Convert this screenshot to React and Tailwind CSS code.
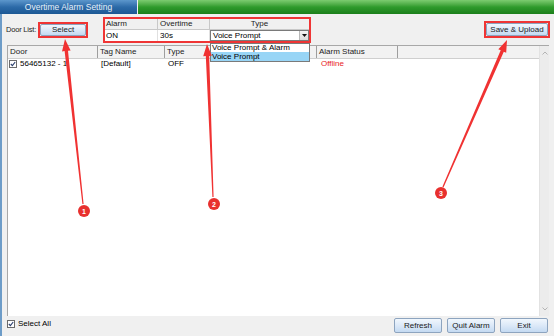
import React from "react";

const RED = "#ef3535";

// flat annotation arrow: thin tail, widening body, pointed head
const arrowPoints = (tx, ty, px, py) => {
  const dx = px - tx;
  const dy = py - ty;
  const len = Math.sqrt(dx * dx + dy * dy);
  const ux = dx / len;
  const uy = dy / len;
  const nx = -uy;
  const ny = ux;
  const head = 12;
  const bx = px - ux * head;
  const by = py - uy * head;
  const pts = [
    [tx + nx * 0.6, ty + ny * 0.6],
    [bx + nx * 1.7, by + ny * 1.7],
    [bx + nx * 4.3, by + ny * 4.3],
    [px, py],
    [bx - nx * 4.3, by - ny * 4.3],
    [bx - nx * 1.7, by - ny * 1.7],
    [tx - nx * 0.6, ty - ny * 0.6],
  ];
  return pts.map((p) => p[0].toFixed(1) + "," + p[1].toFixed(1)).join(" ");
};

const annotations = [
  { n: "1", tail: [83, 204], tip: [65, 39], cx: 84, cy: 211 },
  { n: "2", tail: [213, 197], tip: [207, 44], cx: 214, cy: 204 },
  { n: "3", tail: [443, 187], tip: [507, 40], cx: 441, cy: 193 },
];

const WinButton = ({ children, className = "" }) => (
  <div
    className={`flex items-center justify-center whitespace-nowrap border border-[#8da4bf] rounded-[2px] bg-gradient-to-b from-[#f1f7fd] via-[#dce9f8] to-[#c4daf2] text-[8px] text-[#1a1a1a] ${className}`}
  >
    {children}
  </div>
);

const CheckBox = () => (
  <div className="w-[8px] h-[8px] border border-[#6b6b6b] bg-white flex items-center justify-center">
    <svg width="6" height="6" viewBox="0 0 6 6">
      <polyline points="0.8,3 2.4,4.6 5.2,1" fill="none" stroke="#2b3f6e" strokeWidth="1.1" />
    </svg>
  </div>
);

const columns = [
  { title: "Door", w: "w-[90px]" },
  { title: "Tag Name", w: "w-[67px]" },
  { title: "Type", w: "w-[85px]" },
  { title: "", w: "w-[67px]" },
  { title: "Alarm Status", w: "w-[81px]" },
];

export default function App() {
  return (
    <div className="relative w-[554px] h-[336px] flex flex-col bg-[#f0f0f0] overflow-hidden font-['Liberation_Sans',Arial,sans-serif] text-[8px] leading-none text-black">
      {/* tab bar */}
      <div className="h-[14px] flex shrink-0">
        <div className="w-[137px] flex items-center justify-center text-[#e8f0f8] text-[8.5px] bg-gradient-to-b from-[#5c97cc] via-[#2c6aa8] to-[#1c5894]">
          Overtime Alarm Setting
        </div>
        <div className="flex-1 ml-[1px] bg-gradient-to-b from-[#7ccc70] via-[#2f9b2c] to-[#1b7f1b]" />
      </div>

      {/* body */}
      <div className="flex-1 flex flex-col border-l-2 border-[#6d9cc8]">
        {/* toolbar */}
        <div className="h-[31px] flex shrink-0 pl-[4px] pr-[4px]">
          <div className="w-[32px] mt-[12px] whitespace-nowrap text-[7.5px] tracking-[-0.2px] text-[#222]">Door List:</div>
          <div className="mt-[8px] w-[50px] h-[16px] border-2" style={{ borderColor: RED }}>
            <WinButton className="w-full h-full">Select</WinButton>
          </div>

          <div className="relative ml-[15px] mt-[3px] w-[208px] h-[26px] border-2" style={{ borderColor: RED }}>
            <div className="flex h-[11px] bg-[#f0f0f0] border-b border-[#c8c8c8] text-[#222]">
              <div className="w-[53px] pl-[1px] flex items-center border-r border-[#c8c8c8]">Alarm</div>
              <div className="w-[52px] pl-[2px] flex items-center border-r border-[#c8c8c8]">Overtime</div>
              <div className="flex-1 flex items-center justify-center">Type</div>
            </div>
            <div className="flex h-[11px] bg-white">
              <div className="w-[53px] pl-[1px] flex items-center border-r border-[#e0e0e0]">ON</div>
              <div className="w-[52px] pl-[2px] flex items-center border-r border-[#e0e0e0]">30s</div>
              <div className="flex-1 flex border border-[#7a7a7a]">
                <div className="flex-1 pl-[2px] flex items-center">Voice Prompt</div>
                <div className="w-[9px] flex items-center justify-center bg-gradient-to-b from-[#f4f4f4] to-[#dcdcdc] border-l border-[#b8b8b8]">
                  <svg width="5" height="3" viewBox="0 0 5 3">
                    <polygon points="0,0 5,0 2.5,3" fill="#111" />
                  </svg>
                </div>
              </div>
            </div>
            {/* open dropdown list */}
            <div className="absolute left-[105px] top-[24px] w-[100px] h-[19px] bg-white border border-[#7a7a7a] z-10 overflow-hidden">
              <div className="h-[8px] pl-[1px] flex items-center whitespace-nowrap">Voice Prompt &amp; Alarm</div>
              <div className="h-[9px] pl-[1px] flex items-center bg-[#98d5f6]">Voice Prompt</div>
            </div>
          </div>

          <div className="ml-auto mt-[7px] w-[66px] h-[17px] border-2" style={{ borderColor: RED }}>
            <WinButton className="w-full h-full">Save &amp; Upload</WinButton>
          </div>
        </div>

        {/* door table */}
        <div className="ml-[5px] w-[542px] h-[271px] flex border-t border-l border-[#a8a8a8] shrink-0">
          <div className="flex-1 flex flex-col bg-white">
            <div className="h-[13px] flex bg-[#f2f2f2] border-b border-[#cfcfcf] text-[#222]">
              {columns.map((c, i) => (
                <div key={i} className={`${c.w} pl-[2px] flex items-center border-r border-[#9e9e9e]`}>
                  {c.title}
                </div>
              ))}
              <div className="flex-1" />
            </div>
            <div className="h-[10px] flex items-center">
              <div className="w-[90px] pl-[1px] flex items-center gap-[3px]">
                <CheckBox />
                <span>56465132 - 1</span>
              </div>
              <div className="w-[67px] pl-[3px]">[Default]</div>
              <div className="w-[85px] pl-[3px]">OFF</div>
              <div className="w-[67px]" />
              <div className="w-[81px] pl-[4px] text-[#e8231c]">Offline</div>
            </div>
          </div>
          <div className="w-[10px] flex flex-col justify-between items-center py-[5px] bg-[#ececec] border-l border-[#e2e2e2]">
            <svg width="6" height="4" viewBox="0 0 6 4">
              <polyline points="0.5,3.5 3,1 5.5,3.5" fill="none" stroke="#b4b4b4" strokeWidth="1" />
            </svg>
            <svg width="6" height="4" viewBox="0 0 6 4">
              <polyline points="0.5,0.5 3,3 5.5,0.5" fill="none" stroke="#b4b4b4" strokeWidth="1" />
            </svg>
          </div>
        </div>

        {/* bottom bar */}
        <div className="flex-1 flex pl-[5px] pr-[6px] pt-[2px]">
          <div className="flex items-center gap-[3px] h-[10px] mt-[1px]">
            <CheckBox />
            <span>Select All</span>
          </div>
          <div className="ml-auto flex gap-[5px]">
            <WinButton className="w-[48px] h-[15px]">Refresh</WinButton>
            <WinButton className="w-[48px] h-[15px]">Quit Alarm</WinButton>
            <WinButton className="w-[48px] h-[15px]">Exit</WinButton>
          </div>
        </div>
      </div>

      {/* red annotation arrows */}
      <svg className="absolute inset-0 pointer-events-none z-20" width="554" height="336" viewBox="0 0 554 336">
        {annotations.map((a) => (
          <g key={a.n}>
            <polygon points={arrowPoints(a.tail[0], a.tail[1], a.tip[0], a.tip[1])} fill="#f03232" />
            <circle cx={a.cx} cy={a.cy} r="6" fill="#e8302e" />
            <text
              x={a.cx}
              y={a.cy + 2.5}
              textAnchor="middle"
              fontSize="7"
              fontWeight="bold"
              fill="#fff"
              fontFamily="Liberation Sans, Arial, sans-serif"
            >
              {a.n}
            </text>
          </g>
        ))}
      </svg>
    </div>
  );
}
